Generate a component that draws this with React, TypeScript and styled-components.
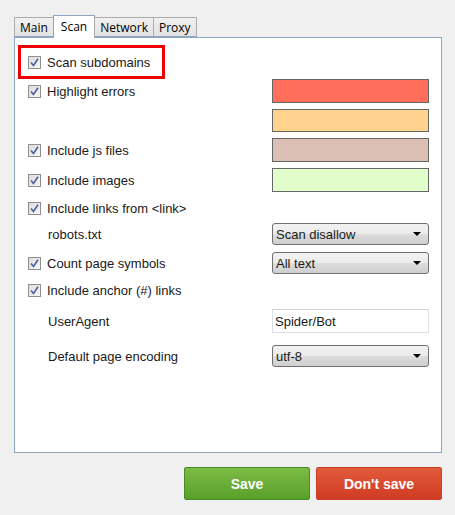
import React, { FC } from 'react';
import styled, { createGlobalStyle } from 'styled-components';

const GlobalStyle = createGlobalStyle`
  html, body {
    margin: 0;
    padding: 0;
    background: #f0f0f0;
  }
  body {
    font-family: 'Liberation Sans', Arial, sans-serif;
    font-size: 13px;
    color: #1a1a1a;
  }
`;

const Window = styled.div`
  width: 455px;
  height: 515px;
  box-sizing: border-box;
  padding: 15px 13px 0 14px;
  display: flex;
  flex-direction: column;
`;

const TabStrip = styled.div`
  display: flex;
  align-items: flex-end;
  height: 22px;
  padding-left: 0;
  position: relative;
  z-index: 1;
`;

const Tab = styled.div<{ active?: boolean }>`
  box-sizing: border-box;
  height: ${({ active }) => (active ? '23px' : '20px')};
  margin-bottom: ${({ active }) => (active ? '-1px' : '0')};
  padding: ${({ active }) => (active ? '3px 7px 0' : '2px 5px 0')};
  border: 1px solid ${({ active }) => (active ? '#8ea6c4' : '#acacac')};
  border-bottom: ${({ active }) => (active ? 'none' : '1px solid #8ea6c4')};
  margin-left: -1px;
  background: ${({ active }) =>
    active ? '#ffffff' : 'linear-gradient(#f0f0f0, #e3e3e3)'};
  font-family: 'Open Sans', 'Noto Sans', sans-serif;
  font-size: 12px;
  line-height: 15px;
  color: #000;
  &:first-child {
    margin-left: 0;
  }
`;

const Panel = styled.div`
  box-sizing: border-box;
  width: 428px;
  height: 416px;
  background: #fff;
  border: 1px solid #8ea6c4;
  padding: 7px 12px 0 3px;
`;

const Row = styled.div<{ h: number }>`
  height: ${({ h }) => h}px;
  display: flex;
  align-items: center;
  box-sizing: border-box;
  padding-left: 10px;
`;

const Highlight = styled(Row)`
  width: 147px;
  border: 3px solid #ee0000;
  padding-left: 7px;
`;

const Label = styled.label<{ indent?: boolean }>`
  flex: 1;
  display: flex;
  align-items: center;
  padding-left: ${({ indent }) => (indent ? '20px' : '0')};
  white-space: nowrap;
`;

const Box = styled.span`
  box-sizing: border-box;
  width: 13px;
  height: 13px;
  margin-right: 6px;
  border: 1px solid #8f8f8f;
  background: linear-gradient(135deg, #dcdcdc, #f7f7f7);
  display: inline-flex;
  align-items: center;
  justify-content: center;
`;

const Swatch = styled.div<{ fill: string }>`
  box-sizing: border-box;
  width: 157px;
  height: ${({ h }: { h?: number }) => h ?? 24}px;
  background: ${({ fill }) => fill};
  border: 1px solid #666;
`;

const Select = styled.div`
  box-sizing: border-box;
  width: 157px;
  height: 22px;
  border: 1px solid #707070;
  border-radius: 3px;
  background: linear-gradient(#f2f2f2 0%, #ebebeb 50%, #dddddd 51%, #cfcfcf 100%);
  display: flex;
  align-items: center;
  justify-content: space-between;
  padding: 0 7px 0 3px;
`;

const Arrow = styled.span`
  width: 0;
  height: 0;
  border-left: 4px solid transparent;
  border-right: 4px solid transparent;
  border-top: 4px solid #000;
`;

const TextInput = styled.div`
  box-sizing: border-box;
  width: 157px;
  height: 24px;
  border: 1px solid #dadfe6;
  border-top-color: #cdd3da;
  background: #fff;
  display: flex;
  align-items: center;
  padding-left: 2px;
`;

const Footer = styled.div`
  display: flex;
  justify-content: flex-end;
  gap: 6px;
  margin-top: 14px;
`;

const Button = styled.button<{ tone: 'green' | 'red' }>`
  width: 126px;
  height: 33px;
  border-radius: 2px;
  border: 1px solid ${({ tone }) => (tone === 'green' ? '#4a8a25' : '#c94027')};
  background: ${({ tone }) =>
    tone === 'green'
      ? 'linear-gradient(#7dbb45, #58a02b)'
      : 'linear-gradient(#e35b3c, #cf3b22)'};
  color: #fff;
  font-family: 'Liberation Sans', Arial, sans-serif;
  font-weight: bold;
  font-size: 14px;
  padding: 0;
`;

const Check: FC = () => (
  <Box>
    <svg width="9" height="9" viewBox="0 0 9 9">
      <path d="M1 4.5 L3.5 7.5 L8 0.8" fill="none" stroke="#4a5fa0" strokeWidth="1.6" />
    </svg>
  </Box>
);

const Drop: FC<{ value: string }> = ({ value }) => (
  <Select>
    <span>{value}</span>
    <Arrow />
  </Select>
);

export default function App() {
  return (
    <>
      <GlobalStyle />
      <Window>
        <TabStrip>
          <Tab>Main</Tab>
          <Tab active>Scan</Tab>
          <Tab>Network</Tab>
          <Tab>Proxy</Tab>
        </TabStrip>
        <Panel>
          <Highlight h={34}>
            <Label>
              <Check />
              Scan subdomains
            </Label>
          </Highlight>
          <Row h={24}>
            <Label>
              <Check />
              Highlight errors
            </Label>
            <Swatch fill="#ff6f5b" />
          </Row>
          <Row h={35}>
            <Label />
            <Swatch fill="#ffd38b" h={23} />
          </Row>
          <Row h={24}>
            <Label>
              <Check />
              Include js files
            </Label>
            <Swatch fill="#dcbfb4" />
          </Row>
          <Row h={36}>
            <Label>
              <Check />
              Include images
            </Label>
            <Swatch fill="#e0fdca" />
          </Row>
          <Row h={20}>
            <Label>
              <Check />
              Include links from &lt;link&gt;
            </Label>
          </Row>
          <Row h={32}>
            <Label indent>robots.txt</Label>
            <Drop value="Scan disallow" />
          </Row>
          <Row h={26}>
            <Label>
              <Check />
              Count page symbols
            </Label>
            <Drop value="All text" />
          </Row>
          <Row h={28}>
            <Label>
              <Check />
              Include anchor (#) links
            </Label>
          </Row>
          <Row h={34}>
            <Label indent>UserAgent</Label>
            <TextInput>Spider/Bot</TextInput>
          </Row>
          <Row h={36}>
            <Label indent>Default page encoding</Label>
            <Drop value="utf-8" />
          </Row>
        </Panel>
        <Footer>
          <Button tone="green">Save</Button>
          <Button tone="red">Don&apos;t save</Button>
        </Footer>
      </Window>
    </>
  );
}
